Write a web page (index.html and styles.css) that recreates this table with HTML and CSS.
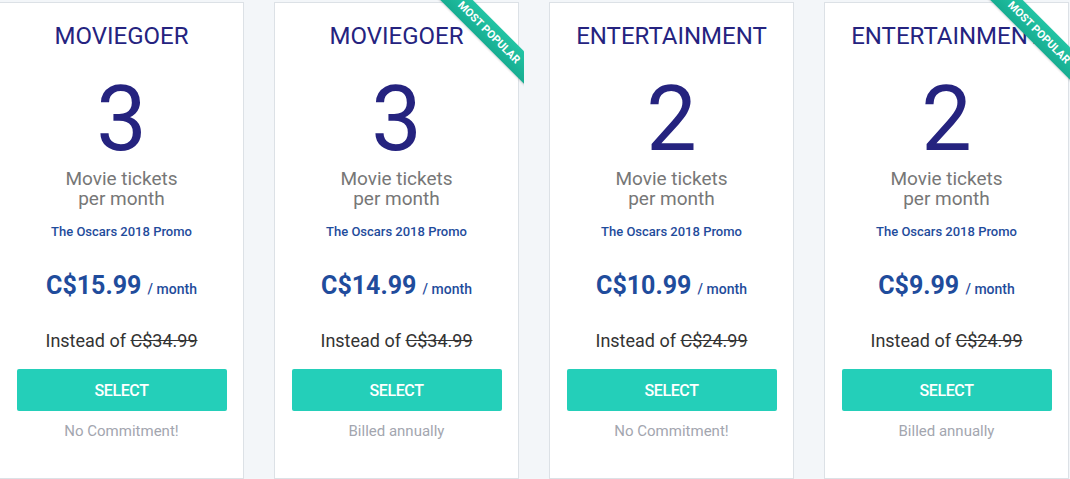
FILE: index.html
```html
<!DOCTYPE html>
<html lang="en">
<head>
    <meta charset="UTF-8">
    <meta name="viewport" content="width=device-width, initial-scale=1.0">
    <title>Plans | Movie Pass</title>
    <link rel="stylesheet" href="styles.css">
</head>
<body>
    <div class="plans">
        <div class="plan">
            <h2 class="plan-name">MOVIEGOER</h2>
            <div class="plan-count">3</div>
            <p class="plan-unit">Movie tickets<br>per month</p>
            <p class="plan-promo">The Oscars 2018 Promo</p>
            <p class="plan-price">C$15.99 <span class="per">/ month</span></p>
            <p class="plan-old">Instead of <s>C$34.99</s></p>
            <button class="select">SELECT</button>
            <p class="plan-note">No Commitment!</p>
        </div>

        <div class="plan">
            <div class="ribbon"><span>MOST POPULAR</span></div>
            <h2 class="plan-name">MOVIEGOER</h2>
            <div class="plan-count">3</div>
            <p class="plan-unit">Movie tickets<br>per month</p>
            <p class="plan-promo">The Oscars 2018 Promo</p>
            <p class="plan-price">C$14.99 <span class="per">/ month</span></p>
            <p class="plan-old">Instead of <s>C$34.99</s></p>
            <button class="select">SELECT</button>
            <p class="plan-note">Billed annually</p>
        </div>

        <div class="plan">
            <h2 class="plan-name">ENTERTAINMENT</h2>
            <div class="plan-count">2</div>
            <p class="plan-unit">Movie tickets<br>per month</p>
            <p class="plan-promo">The Oscars 2018 Promo</p>
            <p class="plan-price">C$10.99 <span class="per">/ month</span></p>
            <p class="plan-old">Instead of <s>C$24.99</s></p>
            <button class="select">SELECT</button>
            <p class="plan-note">No Commitment!</p>
        </div>

        <div class="plan">
            <div class="ribbon"><span>MOST POPULAR</span></div>
            <h2 class="plan-name">ENTERTAINMENT</h2>
            <div class="plan-count">2</div>
            <p class="plan-unit">Movie tickets<br>per month</p>
            <p class="plan-promo">The Oscars 2018 Promo</p>
            <p class="plan-price">C$9.99 <span class="per">/ month</span></p>
            <p class="plan-old">Instead of <s>C$24.99</s></p>
            <button class="select">SELECT</button>
            <p class="plan-note">Billed annually</p>
        </div>
    </div>
</body>
</html>
```

FILE: styles.css
```css
:root {
    --indigo: #25237f;
    --blue: #1f4c9c;
    --teal: #24cfb9;
    --gray: #777;
    --muted: #a3a6af;
    --border: #dce1e6;
}

* {
    margin: 0;
    padding: 0;
    box-sizing: border-box;
    font-family: Roboto, 'Liberation Sans', Arial, sans-serif;
}

body {
    background-color: #f3f6f9;
    overflow: hidden;
}

.plans {
    display: grid;
    grid-template-columns: repeat(4, 245px);
    gap: 30px;
    margin-left: -1px;
    padding-top: 2px;
}

.plan {
    position: relative;
    height: 477px;
    background: white;
    border: 1px solid var(--border);
    text-align: center;
    padding: 19px 16px 0;
    display: flex;
    flex-direction: column;
    align-items: center;
}

.plan-name {
    font-size: 24px;
    line-height: 28px;
    font-weight: 400;
    color: var(--indigo);
    white-space: nowrap;
}

.plan-count {
    margin-top: 25px;
    font-size: 90px;
    line-height: 90px;
    color: var(--indigo);
}

.plan-unit {
    margin-top: 4px;
    font-size: 19px;
    line-height: 20px;
    color: var(--gray);
}

.plan-promo {
    margin-top: 15px;
    font-size: 13px;
    line-height: 16px;
    font-weight: 500;
    color: var(--blue);
}

.plan-price {
    margin-top: 31px;
    font-size: 25px;
    line-height: 30px;
    font-weight: 700;
    color: var(--blue);
}

.plan-price .per {
    font-size: 14px;
    font-weight: 500;
}

.plan-old {
    margin-top: 26px;
    font-size: 18px;
    line-height: 22px;
    color: #333;
}

.select {
    margin-top: 17px;
    width: 210px;
    height: 42px;
    border: none;
    border-radius: 2px;
    background: var(--teal);
    color: white;
    font-size: 16px;
    font-weight: 500;
    letter-spacing: -0.4px;
    cursor: pointer;
}

.plan-note {
    margin-top: 11px;
    font-size: 15px;
    line-height: 18px;
    color: var(--muted);
}

/* corner ribbon */
.ribbon {
    position: absolute;
    top: -5px;
    right: -6px;
    width: 92px;
    height: 92px;
    overflow: hidden;
}

.ribbon span {
    position: absolute;
    left: -10px;
    top: 23px;
    width: 134px;
    height: 23px;
    line-height: 23px;
    transform: rotate(45deg);
    background: linear-gradient(#22c4a4, #17ad91);
    color: white;
    font-size: 11px;
    font-weight: 700;
    text-align: center;
    box-shadow: 0 1px 2px rgba(0, 0, 0, 0.15);
}
```
